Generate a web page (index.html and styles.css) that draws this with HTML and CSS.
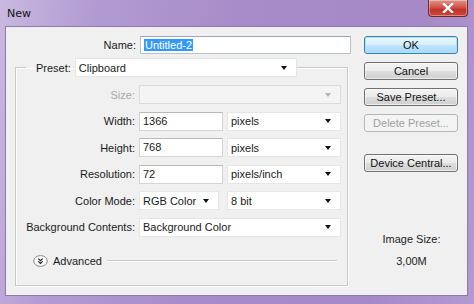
FILE: index.html
```html
<!DOCTYPE html>
<html>
<head>
<meta charset="utf-8">
<link rel="stylesheet" href="styles.css">
</head>
<body>
<div class="window">
  <div class="titlebar">
    <span class="title">New</span>
    <div class="close"><svg width="12" height="10" viewBox="0 0 12 10"><path d="M2 1 L10 9 M10 1 L2 9" stroke="#fff" stroke-width="2.4" stroke-linecap="square"/></svg></div>
  </div>
  <div class="client">
    <div class="main">
      <div class="name-row">
        <label class="lbl name-lbl">Name:</label>
        <div class="input name-input"><span class="sel">Untitled-2</span></div>
      </div>
      <fieldset class="group">
        <legend class="preset">
          <span class="preset-lbl">Preset:</span>
          <div class="select preset-sel"><span>Clipboard</span><i class="arrow"></i></div>
        </legend>
        <div class="grid">
          <label class="lbl disabled">Size:</label>
          <div class="select wide disabled-sel"><span></span><i class="arrow light"></i></div>

          <label class="lbl">Width:</label>
          <div class="input">1366</div>
          <div class="select"><span>pixels</span><i class="arrow"></i></div>

          <label class="lbl">Height:</label>
          <div class="input">768</div>
          <div class="select"><span>pixels</span><i class="arrow"></i></div>

          <label class="lbl">Resolution:</label>
          <div class="input">72</div>
          <div class="select"><span>pixels/inch</span><i class="arrow"></i></div>

          <label class="lbl">Color Mode:</label>
          <div class="select mode"><span>RGB Color</span><i class="arrow"></i></div>
          <div class="select"><span>8 bit</span><i class="arrow"></i></div>

          <label class="lbl">Background Contents:</label>
          <div class="select wide"><span>Background Color</span><i class="arrow"></i></div>
        </div>
        <div class="advanced">
          <span class="adv-icon"><svg width="15" height="12" viewBox="0 0 15 12"><ellipse cx="7.5" cy="6" rx="6.8" ry="5.4" fill="#fafafa" stroke="#8a8a8a" stroke-width="1"/><path d="M5.3 3.6 L7.5 5.6 L9.7 3.6 M5.3 6.4 L7.5 8.4 L9.7 6.4" fill="none" stroke="#222" stroke-width="1.2"/></svg></span>
          <span class="adv-text">Advanced</span>
          <span class="adv-line"></span>
        </div>
      </fieldset>
    </div>
    <div class="side">
      <button class="btn default">OK</button>
      <button class="btn">Cancel</button>
      <button class="btn">Save Preset...</button>
      <button class="btn off">Delete Preset...</button>
      <button class="btn device">Device Central...</button>
      <div class="imgsize">
        <div>Image Size:</div>
        <div class="val">3,00M</div>
      </div>
    </div>
  </div>
</div>
</body>
</html>
```

FILE: styles.css
```css
* { box-sizing: border-box; }
html, body { margin: 0; padding: 0; }
body {
  width: 474px;
  height: 304px;
  overflow: hidden;
  font-family: "Liberation Sans", Arial, sans-serif;
  font-size: 11px;
  color: #1a1a1a;
}
.window {
  width: 474px;
  height: 304px;
  background: linear-gradient(100deg, #c9b9e0 0%, #b29bd2 18%, #a88cc9 45%, #a688c7 80%, #b39ad2 100%);
  display: flex;
  flex-direction: column;
  padding: 0 6px 8px 5px;
}
.titlebar {
  height: 26px;
  display: flex;
  justify-content: space-between;
  align-items: flex-start;
  margin-right: -6px;
  padding-right: 6px;
}
.title {
  font-family: "DejaVu Sans", sans-serif;
  font-size: 11px;
  color: #111;
  margin: 7px 0 0 2px;
}
.close {
  width: 40px;
  height: 17px;
  background: linear-gradient(#e0958a 0%, #d1554a 45%, #c3322a 60%, #cc4a3c 100%);
  border: 1px solid #6e2a2a;
  border-top: none;
  border-radius: 0 0 4px 4px;
  display: flex;
  align-items: center;
  justify-content: center;
  box-shadow: inset 0 0 0 1px rgba(255,255,255,0.35);
}
.client {
  flex: 1;
  background: #f0f0f0;
  border: 1px solid #8d7aa8;
  display: flex;
  padding: 9px 0 0 9px;
}
.main {
  width: 336px;
  display: flex;
  flex-direction: column;
}
.name-row {
  display: flex;
  align-items: center;
  height: 18px;
}
.lbl {
  text-align: right;
  white-space: nowrap;
}
.name-lbl {
  width: 121px;
  margin-right: 4px;
}
.input {
  height: 18px;
  background: #fff;
  border: 1px solid #d5d5d5;
  border-top-color: #b9b9b9;
  padding: 2px 0 0 3px;
  line-height: 13px;
  white-space: nowrap;
}
.name-input {
  width: 211px;
  border-color: #b6c2cc;
  border-top-color: #9aa8b4;
}
.sel {
  background: #3399ff;
  color: #fff;
  padding: 0 1px;
}
.group {
  margin: 4px 0 0 0;
  width: 333px;
  height: 228px;
  border: 1px solid #c9c9c9;
  box-shadow: 1px 1px 0 #fff, inset 1px 1px 0 #fff;
  padding: 0;
  min-width: 0;
}
.preset {
  display: flex;
  align-items: center;
  margin-left: 10px;
  padding: 0 0 0 10px;
}
.preset-lbl {
  margin-right: 4px;
}
.select {
  height: 18px;
  background: #fff;
  border: 1px solid #e6e6e6;
  display: flex;
  align-items: center;
  justify-content: space-between;
  padding: 0 9px 0 3px;
  white-space: nowrap;
}
.preset-sel {
  width: 222px;
  height: 19px;
}
.arrow {
  display: block;
  width: 0;
  height: 0;
  border-left: 3px solid transparent;
  border-right: 3px solid transparent;
  border-top: 4px solid #111;
}
.arrow.light { border-top-color: #b5b5b5; }
.grid {
  display: grid;
  grid-template-columns: 119px 84px 114px;
  grid-auto-rows: 19px;
  column-gap: 4px;
  row-gap: 7.6px;
  align-items: center;
  margin-top: 8px;
}
.grid .input, .grid .select { height: 19px; }
.grid .lbl { grid-column: 1; }
.wide { grid-column: 2 / 4; }
.mode { width: 80px; }
.disabled { color: #a8a8a8; }
.disabled-sel {
  background: #f4f4f4;
  border-color: #dcdcdc;
}
.advanced {
  display: flex;
  align-items: center;
  margin: 17px 0 0 17px;
  height: 14px;
}
.adv-icon { display: flex; margin-right: 5px; }
.adv-text { margin-right: 5px; }
.adv-line {
  flex: 1;
  height: 2px;
  border-top: 1px solid #c9c9c9;
  border-bottom: 1px solid #fff;
  margin-right: 10px;
}
.side {
  width: 94px;
  margin-left: 13px;
  display: flex;
  flex-direction: column;
  align-items: stretch;
}
.btn {
  height: 18px;
  margin: 0 0 8px 0;
  padding: 0;
  font-family: inherit;
  font-size: 11px;
  color: #111;
  border: 1px solid #707070;
  border-radius: 3px;
  background: linear-gradient(#f3f3f3 0%, #ebebeb 48%, #dddddd 52%, #cfcfcf 100%);
  box-shadow: inset 0 0 0 1px rgba(255,255,255,0.6);
}
.btn.default {
  border-color: #3c7fb1;
  background: linear-gradient(#eaf6fd 0%, #d9f0fc 48%, #bee6fd 52%, #a7d9f5 100%);
  box-shadow: inset 0 0 0 1px #a6e3f9;
}
.btn.off {
  color: #a0a0a0;
  border-color: #b5b5b5;
  background: #f4f4f4;
  box-shadow: none;
}
.btn.device { margin-top: 14px; }
.imgsize {
  margin-top: 53px;
  text-align: center;
  color: #222;
  padding-left: 1px;
}
.imgsize .val { margin-top: 10px; }
```
